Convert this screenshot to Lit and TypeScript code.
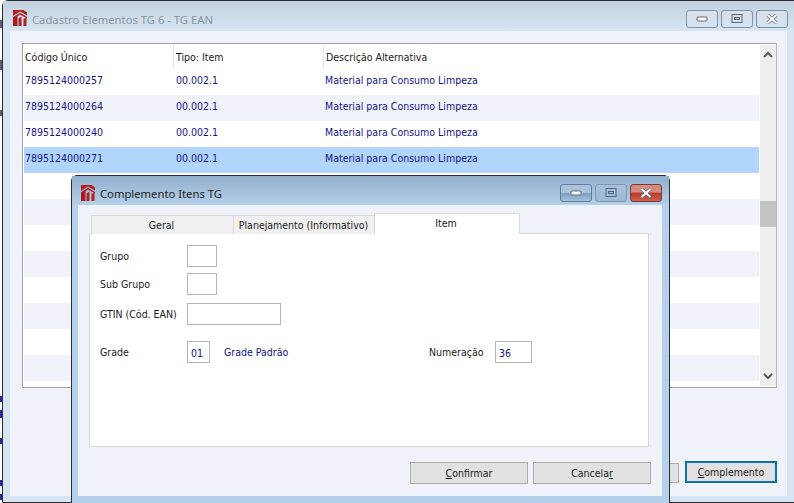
import { LitElement, html, css, svg } from "lit";
import { customElement } from "lit/decorators.js";

const logo = html`<svg class="logo" viewBox="0 0 14 16" width="14" height="16">
  <path d="M0 0 H10.5 L14 2.5 V5.6 L7 1.4 L0 6 Z" fill="#b3201f"/>
  <path d="M0 7.2 L7 2.8 L14 7 V8.6 L7 4.6 L4.5 6.2 V16 H0 Z" fill="#a81c1c"/>
  <path d="M5.5 8.5 L8.5 6.6 V16 H5.5 Z M10.5 9 L13.5 7.6 V16 H10.5 Z" fill="#b3201f"/>
</svg>`;

const minIcon = svg`<rect x="1" y="1" width="10" height="4" rx="1" fill="#fff" stroke="#5b6b7c"/>`;
const maxIcon = svg`<rect x="1" y="0.5" width="10" height="8" fill="none" stroke="#56677a"/><rect x="3.5" y="3.5" width="5" height="2" fill="none" stroke="#56677a"/>`;
const closeIcon = svg`<path d="M1.5 1 L10.5 9 M10.5 1 L1.5 9" fill="none" stroke="#56677a" stroke-width="3.4"/><path d="M1.5 1 L10.5 9 M10.5 1 L1.5 9" fill="none" stroke="#fff" stroke-width="2"/>`;

function caption(kind: string, icon: unknown, extra = "") {
  const h = kind === "min" ? 6 : 10;
  return html`<div class="cap ${extra}">
    <svg viewBox="0 0 12 ${h}" width="12" height=${h}>${icon}</svg>
  </div>`;
}

const rows = [
  ["7895124000257", "00.002.1", "Material para Consumo Limpeza"],
  ["7895124000264", "00.002.1", "Material para Consumo Limpeza"],
  ["7895124000240", "00.002.1", "Material para Consumo Limpeza"],
  ["7895124000271", "00.002.1", "Material para Consumo Limpeza"],
  ...Array.from({ length: 8 }, () => ["", "", ""]),
];

@customElement("app-root")
export class AppRoot extends LitElement {
  static styles = css`
    :host {
      display: block;
      position: relative;
      width: 794px;
      height: 503px;
      overflow: hidden;
      background: #fff;
      font-family: "DejaVu Sans Condensed", "Liberation Sans", sans-serif;
      font-size: 10.5px;
      color: #1a1a1a;
      white-space: nowrap;
    }
    .scrap { position: absolute; left: 0; width: 2px; background: #5a6070; }
    .scrap.blue { background: #2a2a9c; }

    .win {
      position: absolute;
      box-sizing: border-box;
      display: flex;
      flex-direction: column;
      border: 1px solid #2a2d33;
      border-radius: 6px 6px 0 0;
    }
    .win.main {
      left: 2px; top: 0; width: 800px; height: 503px;
      background: #d6e4f3;
      padding: 0 14px 6px 7px;
    }
    .win.dlg {
      left: 71px; top: 175px; width: 599px; height: 340px;
      background: #b5d0ea;
      padding: 0 7px 18px 6px;
    }
    .title {
      flex: none;
      box-sizing: border-box;
      display: flex;
      align-items: center;
      font-family: "Noto Sans", sans-serif;
      font-size: 11.25px;
      padding-top: 6px;
    }
    .main .title {
      height: 30px;
      background: linear-gradient(#c3d1df, #d6e4f3);
      color: #8b949e;
      margin: 0 -14px 0 -7px;
      padding-left: 10px;
    }
    .dlg .title {
      height: 29px;
      margin: 0 -7px 0 -6px;
      background: linear-gradient(#91aecb, #b5d0ea);
      color: #1c1f24;
      padding-left: 9px;
    }
    .logo { flex: none; margin-right: 5px; margin-top: -2px; }
    .title-text { flex: 1; }
    .caps { display: flex; gap: 3px; align-items: flex-start; }
    .main .caps { position: absolute; left: 683px; top: 9px; }
    .dlg .caps { position: absolute; left: 488px; top: 8px; }
    .cap {
      box-sizing: border-box;
      width: 32px;
      height: 18px;
      border: 1px solid #7f93a8;
      border-radius: 3px;
      display: flex;
      align-items: center;
      justify-content: center;
      background: linear-gradient(rgba(255,255,255,.25), rgba(255,255,255,.05));
    }
    .dlg .cap {
      border-color: #5e7c9a;
      background: linear-gradient(#a9c3dc 0 50%, #7d9fc1 50%, #a4c1dd);
    }
    .dlg .cap.faded { border-color: #7d98b3; background: linear-gradient(#a6c0da, #9dbad6); }
    .dlg .cap.close {
      border-color: #7a3a35;
      background: linear-gradient(#d58a80 0 45%, #b93a2a 50%, #c9624f);
    }
    .client {
      flex: 1;
      min-height: 0;
      background: #f0f2fa;
      display: flex;
      flex-direction: column;
    }

    /* main window */
    .main .client { padding: 12px 10px 13px 12px; }
    .table {
      flex: none;
      box-sizing: border-box;
      height: 345px;
      border: 1px solid #a3a3a3;
      border-right-color: #b8b8b8;
      background: #fff;
      display: flex;
      padding: 1px 1px 6px 1px;
    }
    .table-body { width: 735px; flex: none; }
    .thead, .tr {
      display: grid;
      grid-template-columns: 149px 150px 1fr;
      height: 26px;
      align-items: center;
    }
    .thead { height: 24px; }
    .tr .td { position: relative; top: -2px; }
    .th {
      padding-left: 2px;
      height: 24px;
      line-height: 24px;
      color: #1a1a1a;
      border-left: 1px solid #e4e4e4;
    }
    .th:first-child { border-left: none; padding-left: 1px; }
    .td { padding-left: 1px; color: #14148c; }
    .td:nth-child(2) { padding-left: 3px; }
    .td:nth-child(3) { padding-left: 2px; }
    .tr.alt { background: #f1f3fb; }
    .tr.sel { background: #b1d5fb; }
    .scroll {
      flex: none;
      width: 16px;
      margin-left: 1px;
      margin-bottom: -5px;
      background: #eeeeee;
      display: flex;
      flex-direction: column;
      align-items: center;
    }
    .scroll svg { flex: none; }
    .arrow-up { margin-top: 6px; }
    .thumb {
      flex: none;
      align-self: stretch;
      height: 26px;
      margin-top: 143px;
      background: #c4c4c4;
    }
    .arrow-down { margin-top: auto; margin-bottom: 6px; }
    .footer {
      margin-top: auto;
      display: flex;
      justify-content: flex-end;
      align-items: flex-start;
      gap: 6px;
    }
    .btn {
      box-sizing: border-box;
      height: 22px;
      border: 1px solid #adadad;
      background: #e1e1e1;
      color: #1a1a1a;
      display: flex;
      align-items: center;
      justify-content: center;
      flex: none;
    }
    .btn u { text-underline-offset: 1px; }
    .btn.ghost { width: 120px; height: 20px; margin-top: 2px; }
    .btn.focus { width: 92px; border: 2px solid #0f6fb8; }

    /* dialog */
    .dlg .client { padding: 8px 13px 0 11px; }
    .tabs { flex: none; display: flex; align-items: flex-end; height: 21px; margin-left: 2px; position: relative; z-index: 1; margin-bottom: -1px; }
    .tab {
      box-sizing: border-box;
      height: 19px;
      background: #f0f0f0;
      border: 1px solid #d9d9d9;
      border-right: none;
      border-bottom: none;
      display: flex;
      align-items: center;
      justify-content: center;
    }
    .tab.a { width: 142px; padding-right: 2px; }
    .tab.b { width: 141px; padding-right: 1px; }
    .tab.c {
      width: 146px;
      height: 21px;
      background: #fff;
      border-right: 1px solid #d9d9d9;
      padding: 0 2px 3px 0;
    }
    .panel {
      flex: none;
      box-sizing: border-box;
      height: 214px;
      background: #fff;
      border: 1px solid #d9d9d9;
      padding: 11px 0 0 10px;
      display: flex;
      flex-direction: column;
    }
    .frow { display: flex; align-items: center; height: 22px; }
    .frow.r2 { margin-top: 6px; }
    .frow.r3 { margin-top: 8px; }
    .frow.r4 { margin-top: 16px; }
    .lbl { width: 87px; flex: none; }
    .box {
      box-sizing: border-box;
      height: 22px;
      width: 30px;
      flex: none;
      border: 1px solid #b4b4b4;
      background: #fff;
      color: #14148c;
      padding: 2px 0 0 3px;
      line-height: 18px;
    }
    .box.gtin { width: 94px; }
    .box.grade { width: 23px; }
    .box.num { width: 37px; }
    .link { color: #14148c; margin-left: 14px; width: 205px; flex: none; }
    .num-lbl { width: 66px; flex: none; }
    .dlg-foot { display: flex; justify-content: flex-end; gap: 5px; margin: 15px -2px 0 0; }
    .dlg-foot .btn { width: 118px; }
  `;

  render() {
    return html`
      <div class="scrap" style="top:20px;height:8px"></div>
      <div class="scrap" style="top:60px;height:10px"></div>
      <div class="scrap" style="top:110px;height:6px"></div>
      <div class="scrap blue" style="top:396px;height:6px"></div>
      <div class="scrap blue" style="top:410px;height:8px"></div>
      <div class="scrap blue" style="top:438px;height:6px"></div>
      <div class="scrap blue" style="top:480px;height:6px"></div>
      <div class="scrap blue" style="top:494px;height:6px"></div>

      <div class="win main">
        <div class="title">
          ${logo}<span class="title-text">Cadastro Elementos TG 6 - TG EAN</span>
        </div>
        <div class="caps">
          ${caption("min", minIcon)}${caption("max", maxIcon)}${caption("close", closeIcon)}
        </div>
        <div class="client">
          <div class="table">
            <div class="table-body">
              <div class="thead">
                <div class="th">Código Único</div>
                <div class="th">Tipo: Item</div>
                <div class="th">Descrição Alternativa</div>
              </div>
              ${rows.map(
                (r, i) => html`<div class="tr ${i === 3 ? "sel" : i % 2 ? "alt" : ""}">
                  <div class="td">${r[0]}</div>
                  <div class="td">${r[1]}</div>
                  <div class="td">${r[2]}</div>
                </div>`
              )}
            </div>
            <div class="scroll">
              <svg class="arrow-up" viewBox="0 0 10 7" width="10" height="7"><path d="M1 6 L5 2 L9 6" fill="none" stroke="#5a5a5a" stroke-width="2"/></svg>
              <div class="thumb"></div>
              <svg class="arrow-down" viewBox="0 0 10 7" width="10" height="7"><path d="M1 1 L5 5 L9 1" fill="none" stroke="#5a5a5a" stroke-width="2"/></svg>
            </div>
          </div>
          <div class="footer">
            <div class="btn ghost"></div>
            <div class="btn focus"><span><u>C</u>omplemento</span></div>
          </div>
        </div>
      </div>

      <div class="win dlg">
        <div class="title">
          ${logo}<span class="title-text">Complemento Itens TG</span>
        </div>
        <div class="caps">
          ${caption("min", minIcon)}${caption("max", maxIcon, "faded")}${caption("close", closeIcon, "close")}
        </div>
        <div class="client">
          <div class="tabs">
            <div class="tab a">Geral</div>
            <div class="tab b">Planejamento (Informativo)</div>
            <div class="tab c">Item</div>
          </div>
          <div class="panel">
            <div class="frow"><span class="lbl">Grupo</span><div class="box"></div></div>
            <div class="frow r2"><span class="lbl">Sub Grupo</span><div class="box"></div></div>
            <div class="frow r3"><span class="lbl">GTIN (Cód. EAN)</span><div class="box gtin"></div></div>
            <div class="frow r4">
              <span class="lbl">Grade</span><div class="box grade">01</div>
              <span class="link">Grade Padrão</span>
              <span class="num-lbl">Numeração</span><div class="box num">36</div>
            </div>
          </div>
          <div class="dlg-foot">
            <div class="btn"><span><u>C</u>onfirmar</span></div>
            <div class="btn"><span>Cancela<u>r</u></span></div>
          </div>
        </div>
      </div>
    `;
  }
}
